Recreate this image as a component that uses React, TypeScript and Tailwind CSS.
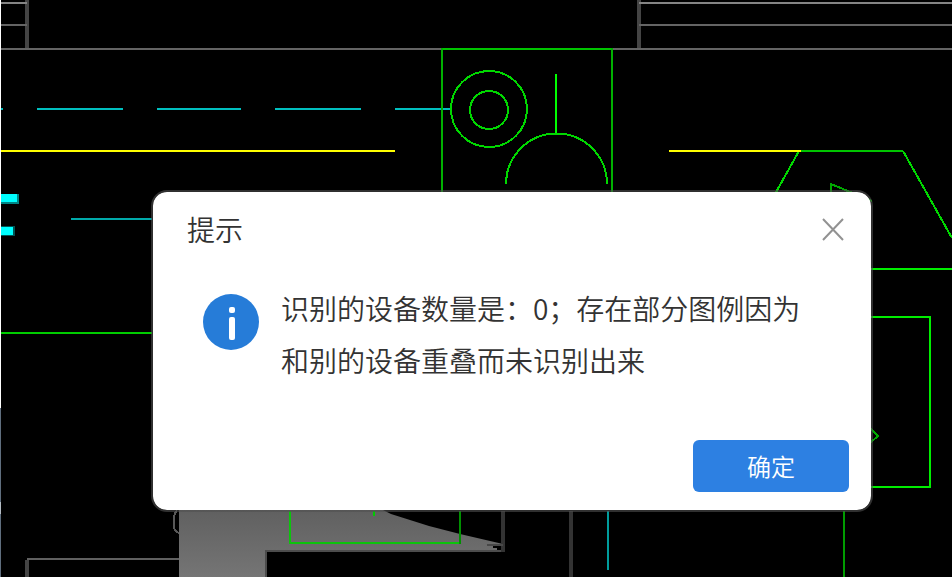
import { useState } from "react";

const DrawingCanvas = () => (
  <svg
    className="absolute inset-0 h-full w-full"
    viewBox="0 0 952 577"
    preserveAspectRatio="xMinYMin slice"
    fill="none"
    strokeWidth="2"
    aria-hidden="true"
  >
    <defs>
      <linearGradient id="slab" x1="0" y1="0" x2="0" y2="1">
        <stop offset="0" stopColor="#606060" />
        <stop offset="1" stopColor="#757575" />
      </linearGradient>
    </defs>

    {/* Window edge */}
    <path d="M0.5 0V408" stroke="#ffffff" strokeWidth="1" />
    <path d="M0.5 408V577" stroke="#5f6e7e" strokeWidth="1" />
    <path d="M0.5 502V514" stroke="#b4bcc4" strokeWidth="1" />

    {/* Walls */}
    <g shapeRendering="crispEdges">
      <path d="M27 0V48M639 0V48" stroke="#444444" strokeWidth="4" />
      <path d="M1 3H27M639 3H952" stroke="#848484" />
      <path d="M1 25H27M639 25H952" stroke="#646464" />
      <path d="M1 49H952" stroke="#646464" />
      <path d="M27 560V577" stroke="#444444" strokeWidth="4" />
      <path d="M27 559H179" stroke="#606060" />
    </g>

    {/* Filled slab */}
    <path d="M179 510H383L391 514L429 526L460 534L503 544V551H266V577H179Z" fill="url(#slab)" />
    <g shapeRendering="crispEdges">
      <path d="M266 577V551H505" stroke="#4c4c4c" />
      <path d="M503 511V552M571 511V577" stroke="#333333" strokeWidth="4" />
      <path d="M487 545H503" stroke="#484848" />
      <path d="M493 547H501M497 549H501" stroke="#000000" />
    </g>
    <path
      d="M177 511Q174 513 174 519V527Q174 531 179 533"
      stroke="#585858"
      shapeRendering="crispEdges"
    />

    {/* Pipes */}
    <g shapeRendering="crispEdges">
      <path d="M1 109H3M37 109H123M157 109H241M275 109H361M395 109H451" stroke="#00bfbf" />
      <path d="M71 219H152" stroke="#00aaaa" />
      <path d="M608 511V570" stroke="#009c9c" />
      <path d="M1 199H19" stroke="#008585" strokeWidth="10" />
      <path d="M1 198H17" stroke="#00ffff" strokeWidth="8" />
      <path d="M1 231H15" stroke="#005555" strokeWidth="10" />
      <path d="M1 231H13" stroke="#00ffff" strokeWidth="8" />
    </g>

    {/* Device symbols */}
    <g shapeRendering="crispEdges">
      <path d="M442 192V48M612 192V48" stroke="#00b000" />
      <path d="M443 49H611M801 151H903" stroke="#00c400" />
      <path d="M556 74V133" stroke="#00ff00" />
      <path d="M1 333H152" stroke="#00cc00" />
      <path d="M870 269H952M870 317H930V487H870" stroke="#00ee00" />
      <path d="M844 511V577" stroke="#009c00" />
      <path d="M290 511V543H460" stroke="#0cc40c" />
      <path d="M460 544V511" stroke="#009000" />
      <path d="M374 511V516" stroke="#00cc00" />
    </g>
    <g stroke="#00d800" shapeRendering="crispEdges">
      <circle cx="489" cy="109" r="38" />
      <circle cx="489" cy="110" r="19" />
      <path d="M506 184A50.5 50.5 0 0 1 607 184" />
      <path d="M799 151L775 194M903 151L952 238" />
      <path d="M831 194V184L872 201M870 428L878 436L870 443" stroke="#00a800" />
    </g>
    <path d="M1 151H395M669 151H801" stroke="#ffff00" shapeRendering="crispEdges" />
  </svg>
);

const InfoIcon = () => (
  <svg className="mt-3 size-14 shrink-0" viewBox="0 0 56 56" aria-hidden="true">
    <circle cx="28" cy="28" r="28" fill="#267cd8" />
    <rect x="26" y="13" width="6" height="6" rx="2" fill="#ffffff" />
    <rect x="26" y="23" width="6" height="23" rx="2" fill="#ffffff" />
  </svg>
);

const CloseIcon = () => (
  <svg className="size-6" viewBox="0 0 24 24" fill="none" aria-hidden="true">
    <path d="M2 2L22 23M22 2L2 23" stroke="#929292" strokeWidth="2" />
  </svg>
);

export default function App() {
  const [open, setOpen] = useState(true);

  return (
    <main className="relative flex min-h-screen items-center justify-center overflow-hidden bg-black pt-[125px] pl-[72px] font-['Noto_Sans_CJK_SC',sans-serif] font-[350] text-[#333333]">
      <DrawingCanvas />
      {open && (
        <div
          role="dialog"
          aria-labelledby="dialog-title"
          aria-describedby="dialog-message"
          className="relative w-full max-w-[722px] rounded-2xl border-2 border-[#505050]/60 bg-white bg-clip-padding"
        >
          <header className="flex items-center justify-between pt-4 pr-[26px] pl-[34px]">
            <h1 id="dialog-title" className="text-[28px] leading-[42px] font-[350]">
              提示
            </h1>
            <button type="button" aria-label="关闭" onClick={() => setOpen(false)}>
              <CloseIcon />
            </button>
          </header>
          <div className="flex gap-[22px] pt-8 pr-16 pl-[50px]">
            <InfoIcon />
            <p id="dialog-message" className="max-w-[530px] text-[28px] leading-[52px]">
              识别的设备数量是：0；存在部分图例因为和别的设备重叠而未识别出来
            </p>
          </div>
          <footer className="flex justify-end pt-[54px] pr-[22px] pb-[18px]">
            <button
              type="button"
              className="h-[52px] w-[156px] rounded-md bg-[#2d80e2] text-2xl text-white"
              onClick={() => setOpen(false)}
            >
              确定
            </button>
          </footer>
        </div>
      )}
    </main>
  );
}
